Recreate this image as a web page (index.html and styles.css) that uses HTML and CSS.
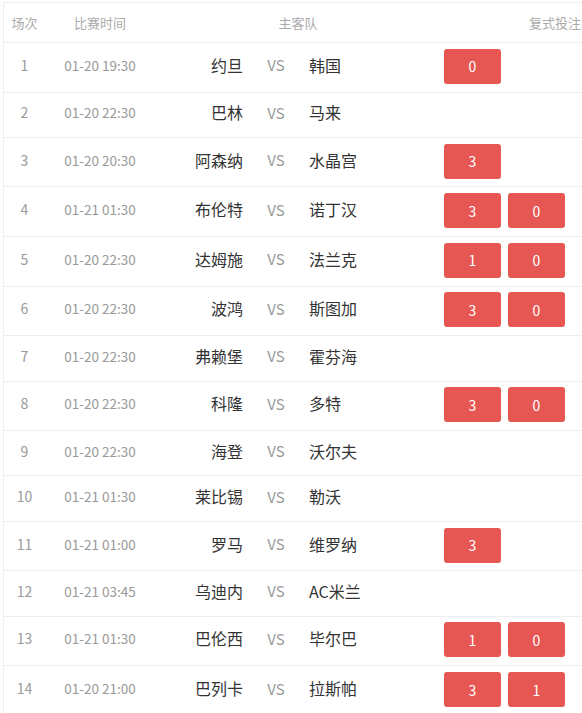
FILE: index.html
```html
<!DOCTYPE html>
<html lang="zh-CN">
<head>
<meta charset="utf-8">
<title>复式投注</title>
<link rel="stylesheet" href="styles.css">
</head>
<body>
<div class="table">
  <div class="row head">
    <div class="c-no">场次</div>
    <div class="c-time">比赛时间</div>
    <div class="c-teams">主客队</div>
    <div class="c-bet-h">复式投注</div>
  </div>
  <div class="row bet">
    <div class="c-no">1</div><div class="c-time">01-20 19:30</div>
    <div class="c-home">约旦</div><div class="c-vs">VS</div><div class="c-away">韩国</div>
    <div class="c-bet"><span class="btn">0</span></div>
  </div>
  <div class="row">
    <div class="c-no">2</div><div class="c-time">01-20 22:30</div>
    <div class="c-home">巴林</div><div class="c-vs">VS</div><div class="c-away">马来</div>
    <div class="c-bet"></div>
  </div>
  <div class="row bet">
    <div class="c-no">3</div><div class="c-time">01-20 20:30</div>
    <div class="c-home">阿森纳</div><div class="c-vs">VS</div><div class="c-away">水晶宫</div>
    <div class="c-bet"><span class="btn">3</span></div>
  </div>
  <div class="row bet">
    <div class="c-no">4</div><div class="c-time">01-21 01:30</div>
    <div class="c-home">布伦特</div><div class="c-vs">VS</div><div class="c-away">诺丁汉</div>
    <div class="c-bet"><span class="btn">3</span><span class="btn">0</span></div>
  </div>
  <div class="row bet">
    <div class="c-no">5</div><div class="c-time">01-20 22:30</div>
    <div class="c-home">达姆施</div><div class="c-vs">VS</div><div class="c-away">法兰克</div>
    <div class="c-bet"><span class="btn">1</span><span class="btn">0</span></div>
  </div>
  <div class="row bet">
    <div class="c-no">6</div><div class="c-time">01-20 22:30</div>
    <div class="c-home">波鸿</div><div class="c-vs">VS</div><div class="c-away">斯图加</div>
    <div class="c-bet"><span class="btn">3</span><span class="btn">0</span></div>
  </div>
  <div class="row">
    <div class="c-no">7</div><div class="c-time">01-20 22:30</div>
    <div class="c-home">弗赖堡</div><div class="c-vs">VS</div><div class="c-away">霍芬海</div>
    <div class="c-bet"></div>
  </div>
  <div class="row bet">
    <div class="c-no">8</div><div class="c-time">01-20 22:30</div>
    <div class="c-home">科隆</div><div class="c-vs">VS</div><div class="c-away">多特</div>
    <div class="c-bet"><span class="btn">3</span><span class="btn">0</span></div>
  </div>
  <div class="row">
    <div class="c-no">9</div><div class="c-time">01-20 22:30</div>
    <div class="c-home">海登</div><div class="c-vs">VS</div><div class="c-away">沃尔夫</div>
    <div class="c-bet"></div>
  </div>
  <div class="row">
    <div class="c-no">10</div><div class="c-time">01-21 01:30</div>
    <div class="c-home">莱比锡</div><div class="c-vs">VS</div><div class="c-away">勒沃</div>
    <div class="c-bet"></div>
  </div>
  <div class="row bet">
    <div class="c-no">11</div><div class="c-time">01-21 01:00</div>
    <div class="c-home">罗马</div><div class="c-vs">VS</div><div class="c-away">维罗纳</div>
    <div class="c-bet"><span class="btn">3</span></div>
  </div>
  <div class="row">
    <div class="c-no">12</div><div class="c-time">01-21 03:45</div>
    <div class="c-home">乌迪内</div><div class="c-vs">VS</div><div class="c-away">AC米兰</div>
    <div class="c-bet"></div>
  </div>
  <div class="row bet">
    <div class="c-no">13</div><div class="c-time">01-21 01:30</div>
    <div class="c-home">巴伦西</div><div class="c-vs">VS</div><div class="c-away">毕尔巴</div>
    <div class="c-bet"><span class="btn">1</span><span class="btn">0</span></div>
  </div>
  <div class="row bet">
    <div class="c-no">14</div><div class="c-time">01-20 21:00</div>
    <div class="c-home">巴列卡</div><div class="c-vs">VS</div><div class="c-away">拉斯帕</div>
    <div class="c-bet"><span class="btn">3</span><span class="btn">1</span></div>
  </div>
</div>
</body>
</html>
```
FILE: styles.css
```css
html, body {
  margin: 0;
  padding: 0;
  background: #fff;
  overflow: hidden;
}
body {
  font-family: "Noto Sans CJK SC", "Noto Sans", sans-serif;
  color: #333;
}
.table {
  margin: 2px 0 0 3px;
  border-top: 1px solid #eee;
  border-left: 1px solid #eee;
}
.row {
  box-sizing: border-box;
  display: grid;
  grid-template-columns: 41px 110px 88px 66px 132px 1fr;
  align-items: center;
  height: 45.3px;
  padding-bottom: 2px;
  border-bottom: 1px solid #eee;
}
.row.bet {
  height: 49.6px;
}
.row.head {
  height: 40px;
  padding-bottom: 0;
  grid-template-columns: 41px 110px 286px 1fr;
  font-size: 13px;
  color: #aaa;
}
.c-no, .c-time, .c-home, .c-vs, .c-away {
  padding-bottom: 3px;
}
.head .c-no, .head .c-time {
  padding-bottom: 0;
  color: #aaa;
  font-size: 13px;
}
.c-no {
  text-align: center;
  font-size: 14px;
  color: #999;
}
.c-time {
  text-align: center;
  font-size: 13.5px;
  color: #999;
}
.c-teams { text-align: center; }
.c-bet-h { text-align: right; padding-right: 1px; }
.c-home {
  text-align: right;
  font-size: 16px;
  color: #333;
}
.c-away {
  text-align: left;
  font-size: 16px;
  color: #333;
}
.c-vs {
  text-align: center;
  font-size: 15px;
  color: #999;
}
.c-bet {
  display: flex;
  gap: 7px;
  padding-left: 3px;
}
.btn {
  box-sizing: border-box;
  width: 57px;
  height: 35px;
  border-radius: 3px;
  background: #e65753;
  color: #fff;
  font-size: 14px;
  display: flex;
  align-items: center;
  justify-content: center;
}
```
